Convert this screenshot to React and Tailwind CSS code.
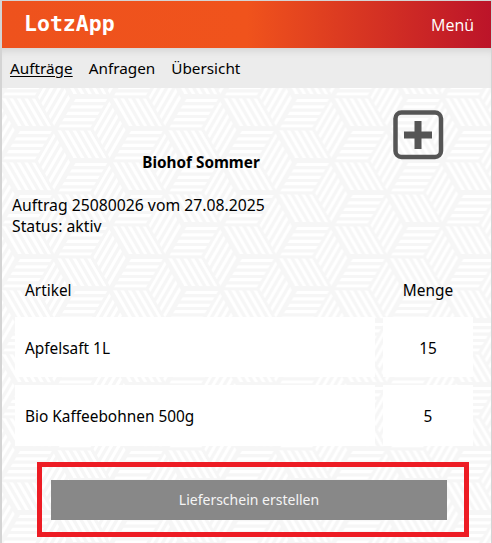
const sans = { fontFamily: '"Noto Sans", "Open Sans", sans-serif' };

const TILE_W = 110.85;
const TILE_H = 64;
const HEX_CENTERS = [
  [0, 0], [TILE_W, 0], [0, TILE_H], [TILE_W, TILE_H],
  [TILE_W / 2, TILE_H / 2], [TILE_W / 2, -TILE_H / 2], [TILE_W / 2, TILE_H * 1.5],
  [-TILE_W / 2, TILE_H / 2], [TILE_W * 1.5, TILE_H / 2],
];
const STRIPES = [3.5, 9.9, 16.3, 22.7, 29.1];

function PatternBackground() {
  return (
    <svg className="absolute inset-0 w-full h-full" aria-hidden="true">
      <defs>
        <clipPath id="rhomb">
          <polygon points="3,1 35,1 17.5,30.5 -14.5,30.5" />
        </clipPath>
        <g id="block">
          <g clipPath="url(#rhomb)">
            {STRIPES.map((y) => (
              <line key={y} x1="-40" x2="60" y1={y} y2={y} stroke="#fff" strokeWidth="3.2" />
            ))}
          </g>
        </g>
        <pattern id="weave" width={TILE_W} height={TILE_H} patternUnits="userSpaceOnUse" patternTransform="translate(71 9)">
          <rect width={TILE_W} height={TILE_H} fill="#f6f6f6" />
          {HEX_CENTERS.map(([x, y]) => (
            <g key={`${x}-${y}`} transform={`translate(${x} ${y})`}>
              <use href="#block" />
              <use href="#block" transform="rotate(120)" />
              <use href="#block" transform="rotate(240)" />
            </g>
          ))}
        </pattern>
      </defs>
      <rect width="100%" height="100%" fill="url(#weave)" />
    </svg>
  );
}

function PlusIcon() {
  return (
    <svg width="51" height="50" viewBox="0 0 51 50" fill="none">
      <rect x="2.5" y="2.5" width="45.5" height="44.5" rx="6" stroke="#555" strokeWidth="4.5" />
      <path d="M11 25h28M25 11v28" stroke="#555" strokeWidth="7" />
    </svg>
  );
}

export default function App() {
  return (
    <div className="h-[543px] overflow-hidden border-t border-l-2 border-r border-[#d4d4d4] flex flex-col text-black" style={sans}>
      <header className="h-[47px] shrink-0 flex items-center justify-between pl-[22px] pr-[17px] bg-[linear-gradient(90deg,#ee521d_0%,#f0531c_50%,#bc1429_100%)] text-white">
        <span className="text-[21.5px] font-bold" style={{ fontFamily: '"DejaVu Sans Mono", monospace' }}>LotzApp</span>
        <span className="text-[16px]" style={{ fontFamily: '"Open Sans", sans-serif' }}>Menü</span>
      </header>

      <nav className="h-10 shrink-0 flex items-center gap-4 pl-2 text-[15.3px] bg-[#ececec] shadow-[inset_0_8px_8px_-6px_rgba(0,0,0,0.12)]">
        <a className="underline underline-offset-2">Aufträge</a>
        <a>Anfragen</a>
        <a>Übersicht</a>
      </nav>

      <main className="relative flex-1">
        <PatternBackground />
        <div className="relative flex flex-col">
          <div className="flex justify-end pt-[22px] pr-[47px]">
            <PlusIcon />
          </div>
          <h1 className="-mt-[8px] w-[398px] h-5 leading-5 text-[15.3px] font-bold text-center">Biohof Sommer</h1>
          <div className="mt-[23px] pl-[10px] text-[15.75px] leading-[21px]">
            <p>Auftrag 25080026 vom 27.08.2025</p>
            <p>Status: aktiv</p>
          </div>

          <div className="mt-[20px] ml-[13px] grid grid-cols-[360px_90px] gap-x-2 gap-y-2 text-[15.4px]">
            <div className="h-[60px] -mb-2 pt-[8px] flex items-center pl-[10px]">Artikel</div>
            <div className="h-[60px] -mb-2 pt-[8px] flex items-center justify-center">Menge</div>
            <div className="h-[60px] pt-[3px] flex items-center pl-[10px] bg-white">Apfelsaft 1L</div>
            <div className="h-[60px] pt-[3px] flex items-center justify-center bg-white">15</div>
            <div className="h-[61px] pt-[2px] flex items-center pl-[10px] bg-white">Bio Kaffeebohnen 500g</div>
            <div className="h-[61px] pt-[2px] flex items-center justify-center bg-white">5</div>
          </div>

          <div className="mt-4 ml-[35px] w-[432px] h-[75px] border-[5px] border-[#ed1c24] pt-[13px] pl-[9px]">
            <button className="w-[396px] h-10 bg-[#888] text-[#f5f5f5] text-sm">Lieferschein erstellen</button>
          </div>
        </div>
      </main>
    </div>
  );
}
